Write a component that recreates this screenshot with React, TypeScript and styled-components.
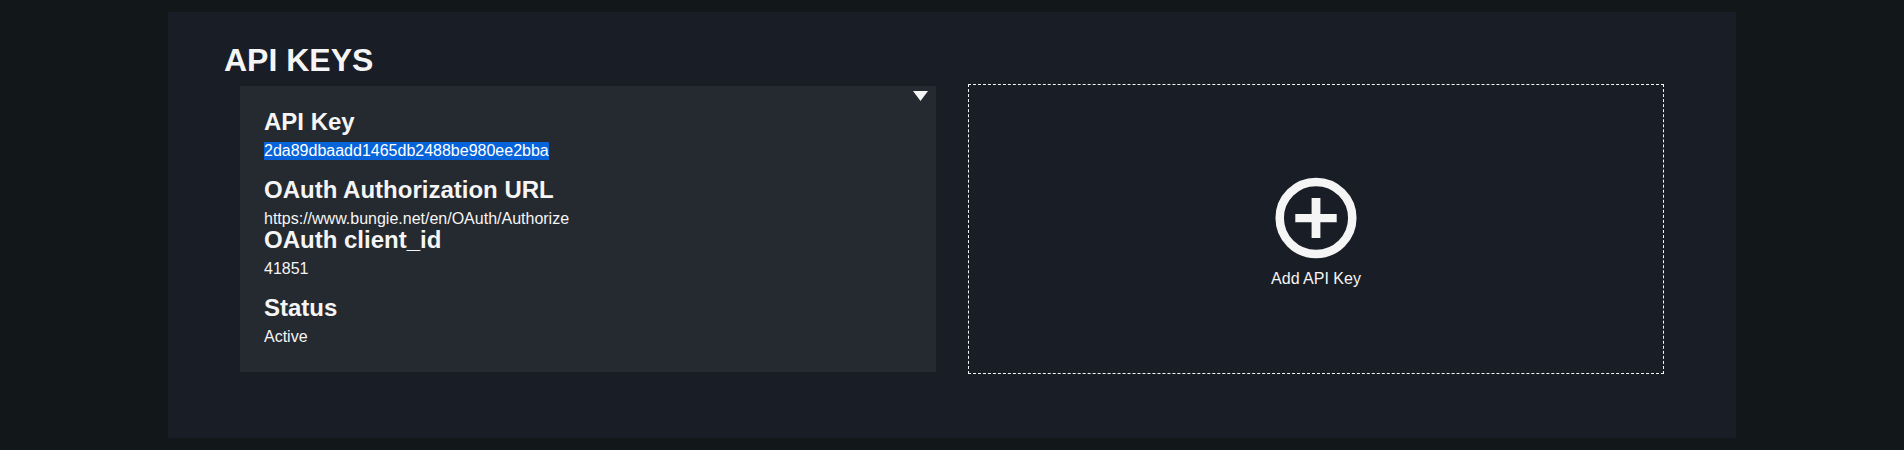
import React from "react";
import styled, { createGlobalStyle } from "styled-components";

const GlobalStyle = createGlobalStyle`
  * { box-sizing: border-box; }
  body {
    margin: 0;
    background: #12171a;
    color: #f5f5f5;
    font: 16px/18px "Liberation Sans", Arial, sans-serif;
  }
`;

const Page = styled.main`
  height: 450px;
  padding: 12px 168px;
  overflow: hidden;
`;

const Panel = styled.section`
  height: 426px;
  padding: 30px 56px 0;
  background: #191d25;
`;

const Title = styled.h1`
  margin: 0;
  height: 42px;
  font-size: 32px;
  line-height: 36px;
`;

const Cards = styled.div`
  display: grid;
  grid-template-columns: 696px 696px;
  column-gap: 32px;
  align-items: center;
  padding: 0 16px;
`;

const KeyCard = styled.article`
  display: flex;
  justify-content: space-between;
  align-items: flex-start;
  height: 286px;
  padding: 5px 8px 0 24px;
  background: #252930;
`;

const Fields = styled.dl`
  margin: 19px 0 0;
`;

const Label = styled.dt`
  font-size: 24px;
  font-weight: bold;
  line-height: 23px;
  margin-bottom: 9px;
`;

const Value = styled.dd<{ $tight?: boolean }>`
  margin: 0 0 ${(p) => (p.$tight ? 0 : 18)}px;
`;

const Selected = styled.span`
  display: inline-block;
  vertical-align: top;
  background: #0763d9;
  color: #fff;
`;

const Caret = styled.svg`
  display: block;
  width: 15px;
  height: 10px;
  fill: #f5f5f5;
`;

const AddCard = styled.button`
  display: flex;
  flex-direction: column;
  align-items: center;
  height: 290px;
  padding: 85px 0 0;
  border: 1px dashed #f5f5f5;
  background: transparent;
  color: inherit;
  font: inherit;
`;

const AddIcon = styled.svg`
  width: 96px;
  height: 96px;
  fill: #f5f5f5;
`;

const AddLabel = styled.span`
  margin-top: 4px;
`;

export default function App() {
  return (
    <>
      <GlobalStyle />
      <Page>
        <Panel>
          <Title>API KEYS</Title>
          <Cards>
            <KeyCard>
              <Fields>
                <Label>API Key</Label>
                <Value>
                  <Selected>2da89dbaadd1465db2488be980ee2bba</Selected>
                </Value>
                <Label>OAuth Authorization URL</Label>
                <Value $tight>https://www.bungie.net/en/OAuth/Authorize</Value>
                <Label>OAuth client_id</Label>
                <Value>41851</Value>
                <Label>Status</Label>
                <Value>Active</Value>
              </Fields>
              <Caret viewBox="0 0 15 10">
                <path d="M0 0h15L7.5 10z" />
              </Caret>
            </KeyCard>
            <AddCard type="button">
              <AddIcon viewBox="0 0 96 96">
                <ellipse cx="48" cy="48" rx="36.3" ry="36" fill="none" stroke="#f5f5f5" strokeWidth="8.5" />
                <path d="M43.6 28h8.8v16h16.3v8.2H52.4V68h-8.8V52.2H27.3V44h16.3z" />
              </AddIcon>
              <AddLabel>Add API Key</AddLabel>
            </AddCard>
          </Cards>
        </Panel>
      </Page>
    </>
  );
}
